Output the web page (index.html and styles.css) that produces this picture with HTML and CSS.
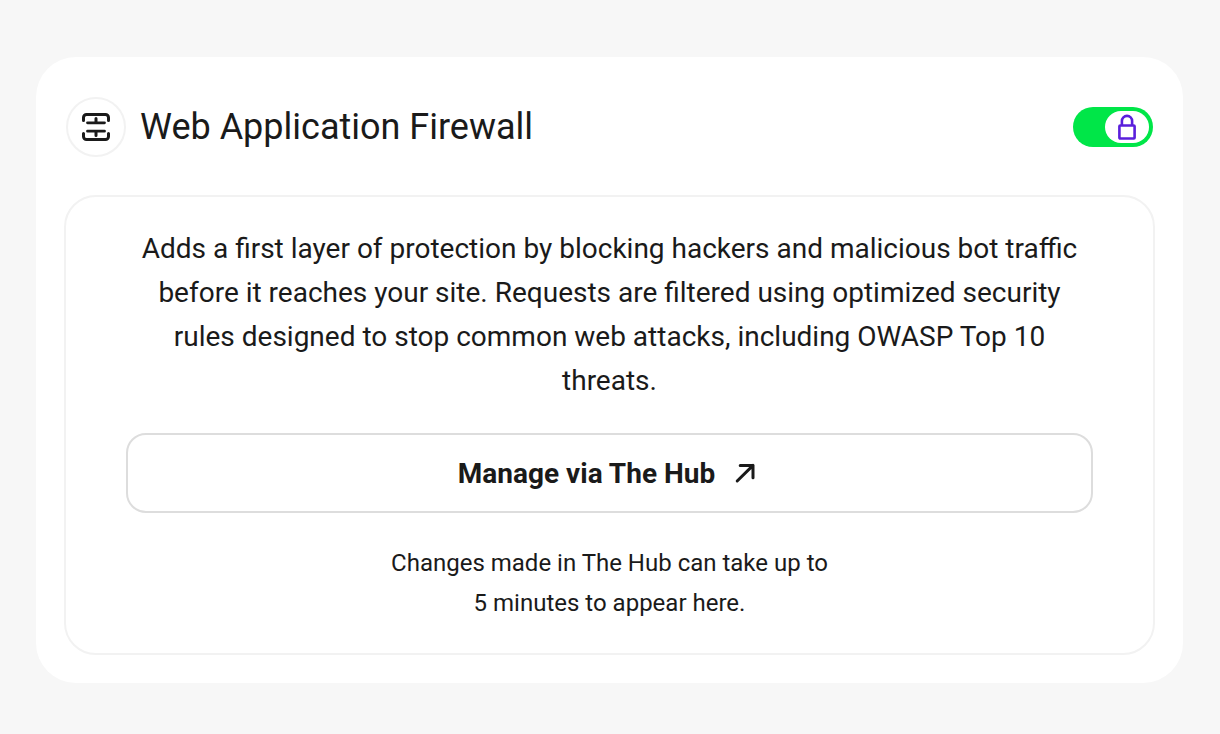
FILE: index.html
```html
<!DOCTYPE html>
<html lang="en">
<head>
  <meta charset="UTF-8" />
  <meta name="viewport" content="width=device-width, initial-scale=1.0" />
  <title>Web Application Firewall</title>
  <link rel="stylesheet" href="styles.css">
</head>
<body>

  <main class="card">
    <header class="card-header">
      <span class="card-icon">
        <svg width="30" height="30" viewBox="0 0 30 30" fill="none" stroke="currentColor" stroke-width="3" stroke-linecap="round" stroke-linejoin="round" aria-hidden="true">
          <path d="M2.5 8.5V5.5a3 3 0 0 1 3-3h19a3 3 0 0 1 3 3v3" />
          <path d="M2.5 21.5v3a3 3 0 0 0 3 3h19a3 3 0 0 0 3-3v-3" />
          <path d="M6.5 10.8h17M6.5 19.2h17" stroke-width="2.8" />
          <path d="M15 6.6v4M15 19.4v4" />
        </svg>
      </span>
      <h1 class="card-title" id="waf-title">Web Application Firewall</h1>
      <label class="toggle">
        <input type="checkbox" class="toggle-input" aria-labelledby="waf-title" checked />
        <span class="toggle-knob">
          <svg width="20" height="26" viewBox="0 0 20 26" fill="none" stroke="currentColor" stroke-width="2.6" stroke-linejoin="round" aria-hidden="true">
            <rect x="2.4" y="11.5" width="15.2" height="13" rx="0.8" />
            <path d="M4.9 11.5V7a5.1 5.1 0 0 1 10.2 0v4.5" />
          </svg>
        </span>
      </label>
    </header>

    <section class="panel">
      <p class="panel-text">Adds a first layer of protection by blocking hackers and malicious bot traffic before it reaches your site. Requests are filtered using optimized security rules designed to stop common web attacks, including OWASP Top 10 threats.</p>

      <a href="#" class="hub-btn">
        Manage via The Hub
        <svg width="32" height="32" viewBox="0 0 32 32" fill="none" stroke="currentColor" stroke-width="3" stroke-linecap="round" stroke-linejoin="round" aria-hidden="true">
          <path d="M8.2 24 24 8.4M11.2 8.4H24v12.4" />
        </svg>
      </a>

      <p class="panel-note">Changes made in The Hub can take up to<br>5 minutes to appear here.</p>
    </section>
  </main>

</body>
</html>
```
FILE: styles.css
```css
* {
  box-sizing: border-box;
}

body {
  margin: 0;
  padding: 57px 37px 50px 36px;
  font-family: Roboto, 'Liberation Sans', sans-serif;
  background-color: #f7f7f7;
  color: #1a1a1a;
}

h1,
p {
  margin: 0;
  font-weight: 400;
}

svg {
  display: block;
}

.card {
  padding: 40px 28px 28px;
  background: #fff;
  border-radius: 40px;
}

.card-header {
  display: flex;
  align-items: center;
  gap: 14px;
  padding: 0 2px;
  margin-bottom: 38px;
}

.card-icon {
  display: grid;
  place-items: center;
  width: 60px;
  height: 60px;
  border: 2px solid #f2f2f2;
  border-radius: 50%;
}

.card-title {
  flex: 1;
  font-size: 36px;
  line-height: 44px;
}

.toggle {
  display: grid;
  align-items: center;
  width: 80px;
  height: 40px;
  cursor: pointer;
}

.toggle-input,
.toggle-knob {
  grid-area: 1 / 1;
}

.toggle-input {
  appearance: none;
  width: 80px;
  height: 40px;
  margin: 0;
  border-radius: 20px;
  background: #ccc;
  cursor: pointer;
}

.toggle-input:checked {
  background: #00e648;
}

.toggle-knob {
  display: grid;
  place-items: center;
  width: 44px;
  height: 32px;
  margin: 0 4px;
  border-radius: 16px;
  background: #fff;
  color: #5a1fdc;
  z-index: 1;
}

.toggle-input:checked + .toggle-knob {
  justify-self: end;
}

.panel {
  display: flex;
  flex-direction: column;
  gap: 30px;
  padding: 30px 60px;
  border: 2px solid #f2f2f2;
  border-radius: 32px;
  text-align: center;
}

.panel-text {
  font-size: 28px;
  line-height: 44px;
}

.hub-btn {
  display: flex;
  align-items: center;
  justify-content: center;
  gap: 14px;
  min-height: 80px;
  border: 2px solid #ddd;
  border-radius: 20px;
  color: inherit;
  font-size: 28px;
  font-weight: 700;
  text-decoration: none;
}

.hub-btn:hover {
  border-color: #1a1a1a;
}

.panel-note {
  font-size: 24px;
  line-height: 40px;
}
```
